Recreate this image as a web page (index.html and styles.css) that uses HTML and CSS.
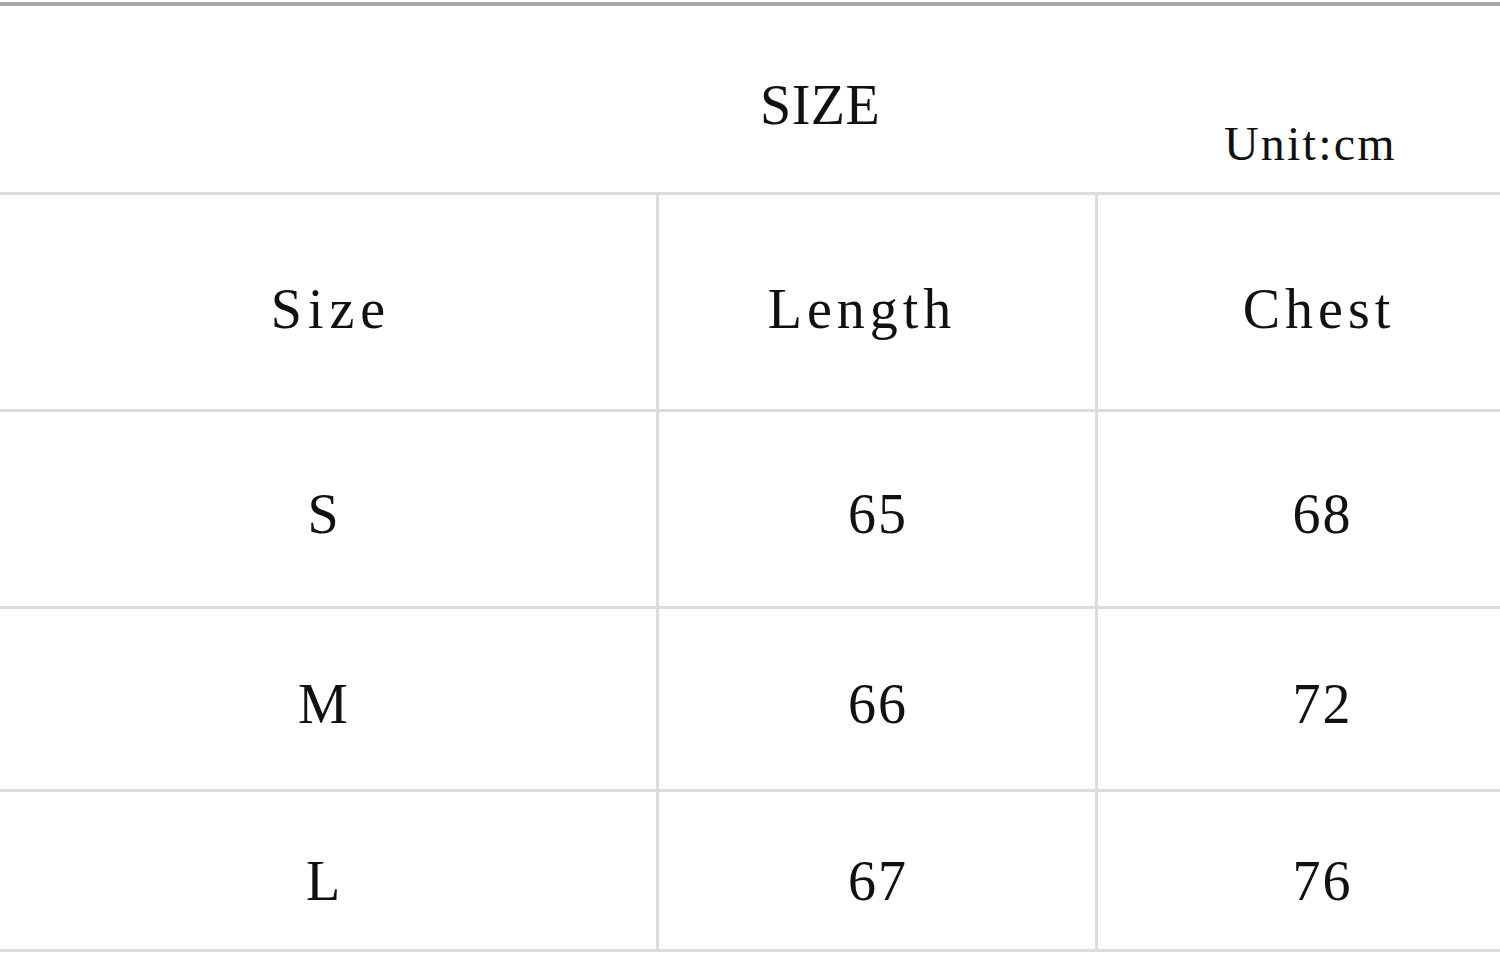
FILE: index.html
```html
<!DOCTYPE html>
<html>
<head>
<meta charset="utf-8">
<link rel="stylesheet" href="styles.css">
</head>
<body>
<div class="chart">
  <div class="title-row">
    <div class="title">SIZE</div>
    <div class="unit">Unit:cm</div>
  </div>
  <div class="grid">
    <div class="cell head c1"><span class="word size-word">Size</span></div>
    <div class="cell head c2"><span class="word length-word">Length</span></div>
    <div class="cell head c3"><span class="word chest-word">Chest</span></div>

    <div class="cell r1 c1"><span class="val">S</span></div>
    <div class="cell r1 c2"><span class="val num">65</span></div>
    <div class="cell r1 c3"><span class="val num">68</span></div>

    <div class="cell r2 c1"><span class="val">M</span></div>
    <div class="cell r2 c2"><span class="val num">66</span></div>
    <div class="cell r2 c3"><span class="val num">72</span></div>

    <div class="cell r3 c1"><span class="val">L</span></div>
    <div class="cell r3 c2"><span class="val num">67</span></div>
    <div class="cell r3 c3"><span class="val num">76</span></div>
  </div>
</div>
</body>
</html>
```

FILE: styles.css
```css
html, body {
  margin: 0;
  padding: 0;
  background: #ffffff;
}

body {
  font-family: "Liberation Serif", "Noto Sans CJK SC", serif;
  color: #111111;
}

.chart {
  width: 1500px;
  height: 955px;
  overflow: hidden;
  padding-top: 2px;
  box-sizing: border-box;
}

.title-row {
  position: relative;
  height: 193px;
  border-top: 4px solid #a6a6a6;
  border-bottom: 3px solid #dcdcdc;
  box-sizing: border-box;
}

.title {
  position: absolute;
  left: 760px;
  top: 67px;
  font-size: 56px;
  line-height: 64px;
  letter-spacing: 0.5px;
}

.unit {
  position: absolute;
  left: 1224px;
  top: 110px;
  font-size: 48px;
  line-height: 56px;
  letter-spacing: 2.2px;
}

.grid {
  display: grid;
  grid-template-columns: 656px 439px 450px;
  grid-template-rows: 217px 197px 183px 160px;
}

.cell {
  display: flex;
  align-items: center;
  justify-content: center;
  border-bottom: 3px solid #dcdcdc;
  box-sizing: border-box;
}

.head { padding-top: 14px; }
.r1 { padding-top: 10px; }
.r2 { padding-top: 10px; }
.r3 { padding-top: 20px; }

.c2, .c3 {
  border-left: 3px solid #dcdcdc;
}

.word {
  font-size: 56px;
  line-height: 64px;
}

.size-word { letter-spacing: 6px; margin-left: 6px; }
.length-word { letter-spacing: 5px; margin-right: 30px; }
.chest-word { letter-spacing: 5px; margin-right: 5px; }

.val {
  font-size: 56px;
  line-height: 64px;
}

.num {
  letter-spacing: 2px;
  margin-left: 2px;
}

.c1 .val { margin-right: 10px; }
```
